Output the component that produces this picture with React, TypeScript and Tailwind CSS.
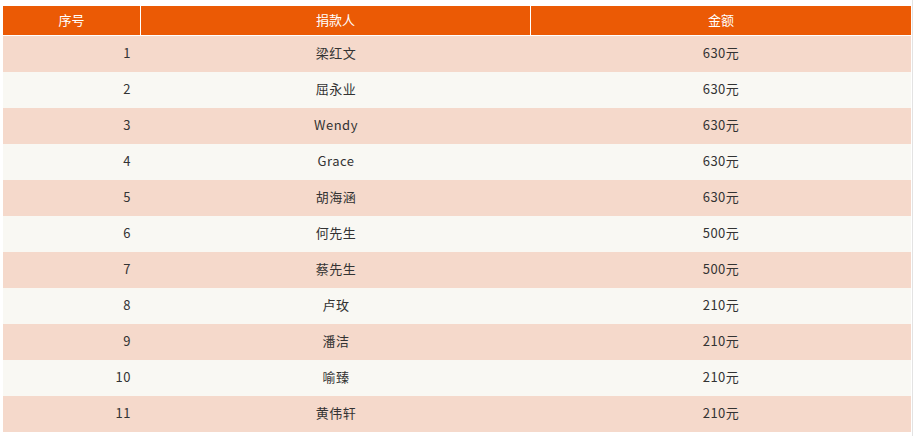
import React from "react";

const rows: [number, string, string][] = [
  [1, "梁红文", "630元"],
  [2, "屈永业", "630元"],
  [3, "Wendy", "630元"],
  [4, "Grace", "630元"],
  [5, "胡海涵", "630元"],
  [6, "何先生", "500元"],
  [7, "蔡先生", "500元"],
  [8, "卢玫", "210元"],
  [9, "潘洁", "210元"],
  [10, "喻臻", "210元"],
  [11, "黄伟轩", "210元"],
];

export default function App() {
  return (
    <div
      className="w-[916px] h-[436px] bg-white relative"
      style={{ fontFamily: '"Noto Sans CJK SC", "Noto Sans", sans-serif' }}
    >
      <div className="absolute left-[912px] top-0 w-px h-[436px] bg-[#e3e3e3]" />
      <div className="pt-[6px] pl-[3px]">
        <div className="w-[908px]">
          <div className="flex h-[30px] bg-[#eb5a05] text-white text-[13px] leading-[28px] border-b border-white">
            <div className="w-[137px] text-center">序号</div>
            <div className="w-px bg-white" />
            <div className="w-[389px] text-center">捐款人</div>
            <div className="w-px bg-white" />
            <div className="flex-1 text-center">金额</div>
          </div>
          {rows.map(([n, name, amt], i) => (
            <div
              key={n}
              className={`flex h-[36px] text-[13px] leading-[33px] text-[#333333] ${
                i % 2 === 0 ? "bg-[#f5d9cb]" : "bg-[#f9f8f3]"
              }`}
            >
              <div className="w-[138px] text-right pr-[10px] tracking-[0.5px]">{n}</div>
              <div className="w-[390px] text-center tracking-[0.5px]">{name}</div>
              <div className="flex-1 text-center tracking-[0.5px]">{amt}</div>
            </div>
          ))}
        </div>
      </div>
    </div>
  );
}
